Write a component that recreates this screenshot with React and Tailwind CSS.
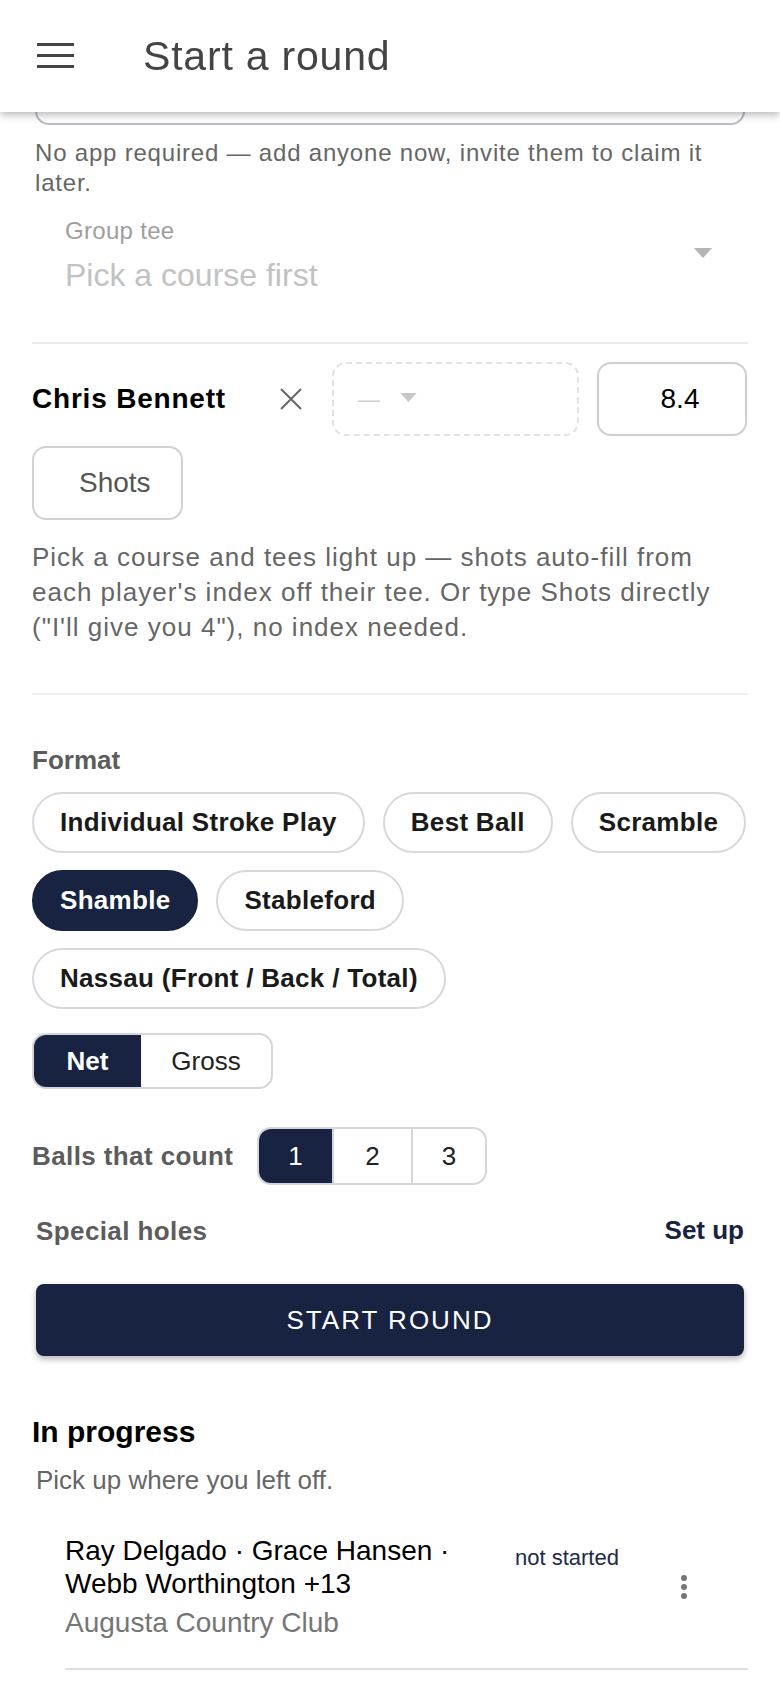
import React from 'react';

const NAVY = 'bg-[#172340]';

const formats = [
  { label: 'Individual Stroke Play' },
  { label: 'Best Ball' },
  { label: 'Scramble' },
  { label: 'Shamble', active: true },
  { label: 'Stableford' },
  { label: 'Nassau (Front / Back / Total)' },
];

const MenuIcon = () => (
  <svg width="38" height="26" viewBox="0 0 38 26" className="block">
    <rect x="0" y="0" width="37" height="3" fill="#444" />
    <rect x="0" y="11" width="37" height="3" fill="#444" />
    <rect x="0" y="22" width="37" height="3" fill="#444" />
  </svg>
);

const CloseIcon = () => (
  <svg width="26" height="26" viewBox="0 0 26 26" className="block">
    <path d="M3 3 L23 23 M23 3 L3 23" stroke="#666" strokeWidth="2" fill="none" />
  </svg>
);

const Caret = ({ color = '#bdbdbd', w = 18, h = 10 }) => (
  <svg width={w} height={h} viewBox="0 0 18 10" className="block">
    <path d="M0 0 H18 L9 10 Z" fill={color} />
  </svg>
);

const MoreIcon = () => (
  <svg width="8" height="28" viewBox="0 0 8 28" className="block">
    <circle cx="4" cy="4" r="3" fill="#757575" />
    <circle cx="4" cy="13" r="3" fill="#757575" />
    <circle cx="4" cy="22" r="3" fill="#757575" />
  </svg>
);

export default function App() {
  return (
    <div className="relative min-h-screen w-full overflow-hidden bg-white font-['Liberation_Sans',Arial,sans-serif]">
      {/* App bar */}
      <header className="fixed inset-x-0 top-0 z-10 flex h-[112px] items-center bg-white shadow-[0_3px_8px_rgba(0,0,0,0.28)]">
        <div className="ml-[37px]">
          <MenuIcon />
        </div>
        <h1 className="ml-[68px] text-[41px] leading-none tracking-[0.8px] text-[#444]">Start a round</h1>
      </header>

      <main className="px-[32px] pt-[13px]">
        {/* players input (scrolled under the bar) */}
        <div className="mx-[3px] h-[112px] rounded-[14px] border-2 border-[#b9bcc6]" />
        <p className="mt-[13px] pl-[3px] text-[24px] leading-[30px] tracking-[0.8px] text-[#666]">
          No app required — add anyone now, invite them to claim it later.
        </p>

        {/* Group tee select */}
        <div className="mt-[18px] flex items-center pl-[33px] pr-[36px]">
          <div className="flex-1">
            <div className="text-[24px] leading-[30px] tracking-[0.3px] text-[#9e9e9e]">Group tee</div>
            <div className="mt-[9px] text-[32px] leading-[40px] text-[#c2c2c2]">Pick a course first</div>
          </div>
          <div className="-mt-[6px]">
            <Caret color="#b5b5b5" />
          </div>
        </div>

        <div className="mt-[47px] h-[2px] bg-[#ececec]" />

        {/* Player row */}
        <div className="mt-[18px] flex items-center">
          <div className="w-[246px] text-[28px] font-bold tracking-[0.8px] text-black">Chris Bennett</div>
          <CloseIcon />
          <div className="ml-[28px] flex h-[74px] w-[247px] items-center gap-[20px] rounded-[14px] border-2 border-dashed border-[#e2e2e2] pl-[24px]">
            <span className="text-[22px] text-[#cfcfcf]">—</span>
            <div className="-mt-[4px]">
              <Caret color="#c8c8c8" w={17} h={9} />
            </div>
          </div>
          <div className="ml-[18px] flex h-[74px] w-[150px] items-center justify-center rounded-[14px] border-2 border-[#cfcfcf] pl-[16px] text-[28px] text-black">
            8.4
          </div>
        </div>

        <div className="mt-[10px] flex h-[74px] w-[151px] items-center rounded-[14px] border-2 border-[#d2d2d2] pl-[45px] text-[28px] text-[#555]">
          Shots
        </div>

        <p className="mt-[20px] text-[26px] leading-[35px] tracking-[1px] text-[#666]">
          Pick a course and tees light up — shots auto-fill from each player's index off their tee. Or type Shots directly ("I'll give you 4"), no index needed.
        </p>

        <div className="mt-[48px] h-[2px] bg-[#eef0f3]" />

        {/* Format */}
        <div className="mt-[49px] text-[26px] font-bold leading-[32px] text-[#5c5c5c]">Format</div>
        <div className="mt-[16px] flex flex-wrap gap-x-[18px] gap-y-[17px]">
          {formats.map((f) =>
            f.active ? (
              <div
                key={f.label}
                className={`flex h-[61px] items-center rounded-full border-2 border-[#172340] ${NAVY} px-[26px] text-[26px] font-bold tracking-[0.3px] text-white`}
              >
                {f.label}
              </div>
            ) : (
              <div
                key={f.label}
                className="flex h-[61px] items-center rounded-full border-2 border-[#d6d8de] bg-white px-[26px] text-[26px] font-bold tracking-[0.3px] text-[#1a1a1a]"
              >
                {f.label}
              </div>
            )
          )}
        </div>

        {/* Net / Gross */}
        <div className="mt-[24px] flex h-[56px] w-[241px] overflow-hidden rounded-[14px] border-2 border-[#d4d6dc]">
          <div className={`flex w-[107px] items-center justify-center ${NAVY} text-[26px] font-bold text-white`}>Net</div>
          <div className="flex flex-1 items-center justify-center text-[26px] text-[#222]">Gross</div>
        </div>

        {/* Balls that count */}
        <div className="mt-[38px] flex items-center">
          <div className="w-[225px] text-[26px] font-bold tracking-[0.4px] text-[#5c5c5c]">Balls that count</div>
          <div className="flex h-[58px] overflow-hidden rounded-[14px] border-2 border-[#d4d6dc]">
            <div className={`flex w-[73px] items-center justify-center ${NAVY} text-[26px] text-white`}>1</div>
            <div className="flex w-[79px] items-center justify-center border-l-2 border-[#d4d6dc] text-[26px] text-[#222]">2</div>
            <div className="flex w-[74px] items-center justify-center border-l-2 border-[#d4d6dc] text-[26px] text-[#222]">3</div>
          </div>
        </div>

        {/* Special holes */}
        <div className="mt-[30px] flex items-center justify-between px-[4px] leading-[32px]">
          <span className="text-[26px] font-bold tracking-[0.4px] text-[#5c5c5c]">Special holes</span>
          <span className="-mt-[3px] text-[26px] font-bold text-[#172340]">Set up</span>
        </div>

        <button className={`mx-[4px] mt-[37px] flex h-[72px] w-[708px] items-center justify-center rounded-[8px] ${NAVY} text-[26px] uppercase tracking-[2px] text-white shadow-[0_3px_6px_rgba(0,0,0,0.3)]`}>
          Start round
        </button>

        {/* In progress */}
        <h2 className="mt-[58px] text-[30px] font-bold leading-[36px] text-black">In progress</h2>
        <p className="mt-[14px] pl-[4px] text-[26px] leading-[32px] text-[#666]">Pick up where you left off.</p>

        <div className="mt-[38px] flex items-start pl-[33px]">
          <div className="w-[420px]">
            <div className="text-[28px] leading-[33px] text-black">Ray Delgado · Grace Hansen · Webb Worthington +13</div>
            <div className="mt-[5px] text-[28px] leading-[36px] text-[#757575]">Augusta Country Club</div>
          </div>
          <div className="ml-[30px] mt-[7px] text-[22px] leading-[33px] text-[#1e2a4a]">not started</div>
          <div className="ml-auto mr-[60px] mt-[40px]">
            <MoreIcon />
          </div>
        </div>
        <div className="ml-[33px] mt-[27px] h-[2px] bg-[#e0e0e0]" />
      </main>
    </div>
  );
}
